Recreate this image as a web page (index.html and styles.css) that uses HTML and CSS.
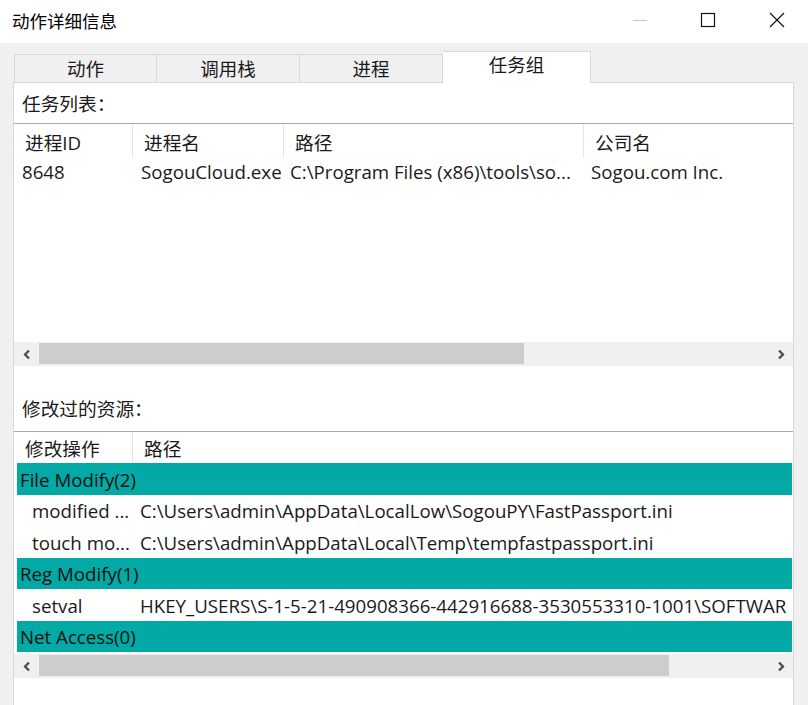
FILE: index.html
```html
<!DOCTYPE html>
<html lang="zh-CN">
<head>
    <meta charset="UTF-8">
    <title>动作详细信息</title>
    <link rel="stylesheet" href="styles.css">
</head>
<body>
    <div class="titlebar">
        <span class="title">动作详细信息</span>
        <div class="controls">
            <span class="ctl min">
                <svg width="16" height="16" viewBox="0 0 16 16"><line x1="1" y1="8.5" x2="15" y2="8.5" stroke="#c4c4c4" stroke-width="1"/></svg>
            </span>
            <span class="ctl max">
                <svg width="16" height="16" viewBox="0 0 16 16"><rect x="1.5" y="1.5" width="13" height="13" fill="none" stroke="#111" stroke-width="1.2"/></svg>
            </span>
            <span class="ctl close">
                <svg width="16" height="16" viewBox="0 0 16 16"><path d="M1 1 L15 15 M15 1 L1 15" stroke="#111" stroke-width="1.2" fill="none"/></svg>
            </span>
        </div>
    </div>

    <div class="tabs">
        <div class="tab">动作</div>
        <div class="tab">调用栈</div>
        <div class="tab">进程</div>
        <div class="tab active">任务组</div>
    </div>

    <div class="panel">
        <div class="label">任务列表：</div>
        <div class="list tasks">
            <div class="row head">
                <span class="c c-id">进程ID</span>
                <span class="c c-name">进程名</span>
                <span class="c c-path">路径</span>
                <span class="c c-corp">公司名</span>
            </div>
            <div class="row">
                <span class="c c-id">8648</span>
                <span class="c c-name">SogouCloud.exe</span>
                <span class="c c-path">C:\Program Files (x86)\tools\so...</span>
                <span class="c c-corp">Sogou.com Inc.</span>
            </div>
            <div class="list-fill"></div>
            <div class="hscroll">
                <span class="arrow"><svg width="10" height="11" viewBox="0 0 10 11"><path d="M7 1.5 L3 5.5 L7 9.5" fill="none" stroke="#4a4a4a" stroke-width="2.2"/></svg></span>
                <span class="track"><span class="thumb" style="width: 485px"></span></span>
                <span class="arrow"><svg width="10" height="11" viewBox="0 0 10 11"><path d="M3 1.5 L7 5.5 L3 9.5" fill="none" stroke="#4a4a4a" stroke-width="2.2"/></svg></span>
            </div>
        </div>

        <div class="label second">修改过的资源：</div>
        <div class="list resources">
            <div class="row head">
                <span class="c c-op">修改操作</span>
                <span class="c c-rpath">路径</span>
            </div>
            <div class="group tall">File Modify(2)</div>
            <div class="item">
                <span class="c c-op">modified ...</span>
                <span class="c c-rpath">C:\Users\admin\AppData\LocalLow\SogouPY\FastPassport.ini</span>
            </div>
            <div class="item tall">
                <span class="c c-op">touch mo...</span>
                <span class="c c-rpath">C:\Users\admin\AppData\Local\Temp\tempfastpassport.ini</span>
            </div>
            <div class="group">Reg Modify(1)</div>
            <div class="item tall">
                <span class="c c-op">setval</span>
                <span class="c c-rpath">HKEY_USERS\S-1-5-21-490908366-442916688-3530553310-1001\SOFTWAR</span>
            </div>
            <div class="group">Net Access(0)</div>
            <div class="hscroll">
                <span class="arrow"><svg width="10" height="11" viewBox="0 0 10 11"><path d="M7 1.5 L3 5.5 L7 9.5" fill="none" stroke="#4a4a4a" stroke-width="2.2"/></svg></span>
                <span class="track"><span class="thumb" style="width: 630px"></span></span>
                <span class="arrow"><svg width="10" height="11" viewBox="0 0 10 11"><path d="M3 1.5 L7 5.5 L3 9.5" fill="none" stroke="#4a4a4a" stroke-width="2.2"/></svg></span>
            </div>
        </div>
    </div>
</body>
</html>
```

FILE: styles.css
```css
*, *:before, *:after {
    box-sizing: border-box;
}

:root {
    --bg: #f0f0f0;
    --white: #fff;
    --text: #1a1a1a;
    --line: #d9d9d9;
    --teal: #02a9a5;
    --thumb: #cdcdcd;
}

body {
    margin: 0;
    height: 705px;
    overflow: hidden;
    background-color: var(--bg);
    color: var(--text);
    font-family: "Open Sans", "Noto Sans CJK SC", sans-serif;
    font-size: 18.7px;
}

/* title bar */
.titlebar {
    height: 43px;
    background-color: var(--white);
    display: flex;
    align-items: center;
    padding-left: 12px;
}

.title {
    font-size: 17.5px;
    color: #000;
    margin-top: -2px;
}

.controls {
    margin-left: auto;
    display: flex;
    align-items: center;
    margin-top: -3px;
}

.ctl {
    display: flex;
    width: 16px;
    height: 16px;
}

.ctl.min { margin-right: 52px; }
.ctl.max { margin-right: 53px; }
.ctl.close { margin-right: 23px; }

/* tabs */
.tabs {
    display: flex;
    align-items: flex-end;
    height: 39px;
    padding-left: 14px;
}

.tab {
    width: 143px;
    height: 28px;
    border: 1px solid var(--line);
    border-bottom: none;
    border-left: none;
    background-color: var(--bg);
    display: flex;
    align-items: center;
    justify-content: center;
    font-size: 18.5px;
    line-height: 1;
    padding-top: 2px;
}

.tab:first-child {
    border-left: 1px solid var(--line);
}

.tab.active {
    width: 148px;
    height: 32px;
    margin-bottom: -1px;
    background-color: var(--white);
    position: relative;
    padding-top: 0;
    padding-bottom: 4px;
}

/* panel */
.panel {
    margin-left: 13px;
    width: 781px;
    height: 623px;
    background-color: var(--white);
    border: 1px solid var(--line);
    border-bottom: none;
    overflow: hidden;
}

.label {
    height: 40px;
    padding: 7px 0 0 8px;
    line-height: 28px;
}

.label.second {
    height: 65px;
    padding-top: 29px;
}

.list {
    margin-left: -1px;
    border-top: 1px solid #a8a8a8;
    border-left: 1px solid #c8c8c8;
    display: flex;
    flex-direction: column;
    overflow: hidden;
}

.row {
    display: flex;
    align-items: center;
    height: 30px;
    white-space: nowrap;
}

.row.head {
    height: 34px;
}

.tasks .row:not(.head) {
    padding-bottom: 3px;
}

.resources .row.head {
    height: 31px;
}

.c {
    flex: none;
    overflow: hidden;
    padding-left: 8px;
}

.head .c {
    height: 100%;
    display: flex;
    align-items: center;
    padding-left: 11px;
    border-right: 1px solid #e5e5e5;
}

.c-id { width: 119px; }
.c-name { width: 151px; }
.c-path { width: 300px; padding-left: 6px; }
.c-corp { width: 210px; padding-left: 7px; }

.head .c-corp { border-right: none; }

.list-fill {
    height: 154px;
}

/* modified resources */
.c-op {
    width: 119px;
    padding-left: 18px;
}

.head .c-op { padding-left: 11px; }

.c-rpath {
    flex: 1;
    padding-left: 7px;
}

.head .c-rpath {
    border-right: none;
}

.group {
    height: 31px;
    margin-left: 3px;
    margin-right: 1px;
    padding-left: 3px;
    display: flex;
    align-items: center;
    background-color: var(--teal);
    color: #111;
}

.item {
    height: 31px;
    display: flex;
    align-items: center;
    white-space: nowrap;
}

.tall {
    height: 32px;
}

/* scrollbar */
.hscroll {
    height: 24px;
    display: flex;
    align-items: stretch;
    background-color: var(--bg);
}

.resources .hscroll {
    margin-top: 2px;
}

.arrow {
    width: 25px;
    display: flex;
    align-items: center;
    justify-content: center;
}

.track {
    flex: 1;
    display: flex;
    padding: 1px 0 2px;
}

.thumb {
    background-color: var(--thumb);
}
```
